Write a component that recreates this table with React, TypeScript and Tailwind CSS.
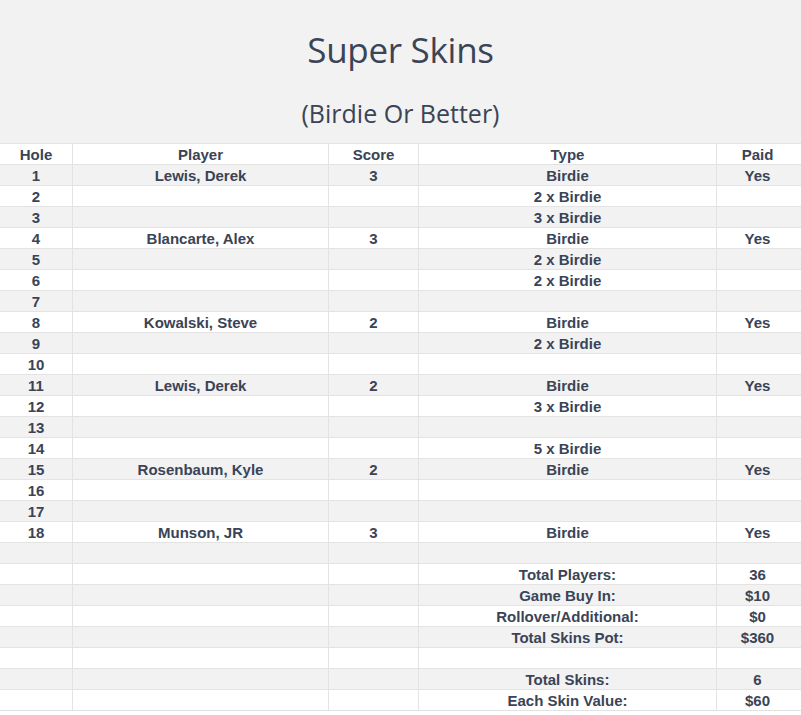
const rows: [string, string, string, string, string][] = [
  ['1', 'Lewis, Derek', '3', 'Birdie', 'Yes'],
  ['2', '', '', '2 x Birdie', ''],
  ['3', '', '', '3 x Birdie', ''],
  ['4', 'Blancarte, Alex', '3', 'Birdie', 'Yes'],
  ['5', '', '', '2 x Birdie', ''],
  ['6', '', '', '2 x Birdie', ''],
  ['7', '', '', '', ''],
  ['8', 'Kowalski, Steve', '2', 'Birdie', 'Yes'],
  ['9', '', '', '2 x Birdie', ''],
  ['10', '', '', '', ''],
  ['11', 'Lewis, Derek', '2', 'Birdie', 'Yes'],
  ['12', '', '', '3 x Birdie', ''],
  ['13', '', '', '', ''],
  ['14', '', '', '5 x Birdie', ''],
  ['15', 'Rosenbaum, Kyle', '2', 'Birdie', 'Yes'],
  ['16', '', '', '', ''],
  ['17', '', '', '', ''],
  ['18', 'Munson, JR', '3', 'Birdie', 'Yes'],
  ['', '', '', '', ''],
  ['', '', '', 'Total Players:', '36'],
  ['', '', '', 'Game Buy In:', '$10'],
  ['', '', '', 'Rollover/Additional:', '$0'],
  ['', '', '', 'Total Skins Pot:', '$360'],
  ['', '', '', '', ''],
  ['', '', '', 'Total Skins:', '6'],
  ['', '', '', 'Each Skin Value:', '$60'],
];

function Row({ cells, shaded }: { cells: string[]; shaded: boolean }) {
  return (
    <div
      className={`grid h-[21px] grid-cols-[72px_256px_90px_298px_85px] border-b border-[#e3e3e3] ${
        shaded ? 'bg-[#f2f2f2]' : 'bg-white'
      }`}
    >
      {cells.map((c, i) => (
        <div
          key={i}
          className={`flex items-center justify-center leading-none ${i > 0 ? 'border-l border-[#e3e3e3]' : ''} ${
            i === 4 ? 'pr-[3px]' : ''
          }`}
        >
          {c}
        </div>
      ))}
    </div>
  );
}

export default function App() {
  return (
    <div className="w-[801px] h-[715px] bg-white text-[#3a4456] overflow-hidden">
      <div className="h-[143px] bg-[#f2f2f2] flex flex-col items-center font-['Open_Sans',sans-serif] font-normal">
        <h1 className="mt-[30px] text-[35px] leading-[40px] tracking-[-0.3px]">Super Skins</h1>
        <p className="mt-[28px] text-[25px] leading-[30px]">(Birdie Or Better)</p>
      </div>
      <div className="border-t border-[#e3e3e3] font-['Liberation_Sans',Arial,sans-serif] font-bold text-[15px]">
        <Row cells={['Hole', 'Player', 'Score', 'Type', 'Paid']} shaded={false} />
        {rows.map((r, i) => (
          <Row key={i} cells={r} shaded={i % 2 === 0} />
        ))}
      </div>
    </div>
  );
}
